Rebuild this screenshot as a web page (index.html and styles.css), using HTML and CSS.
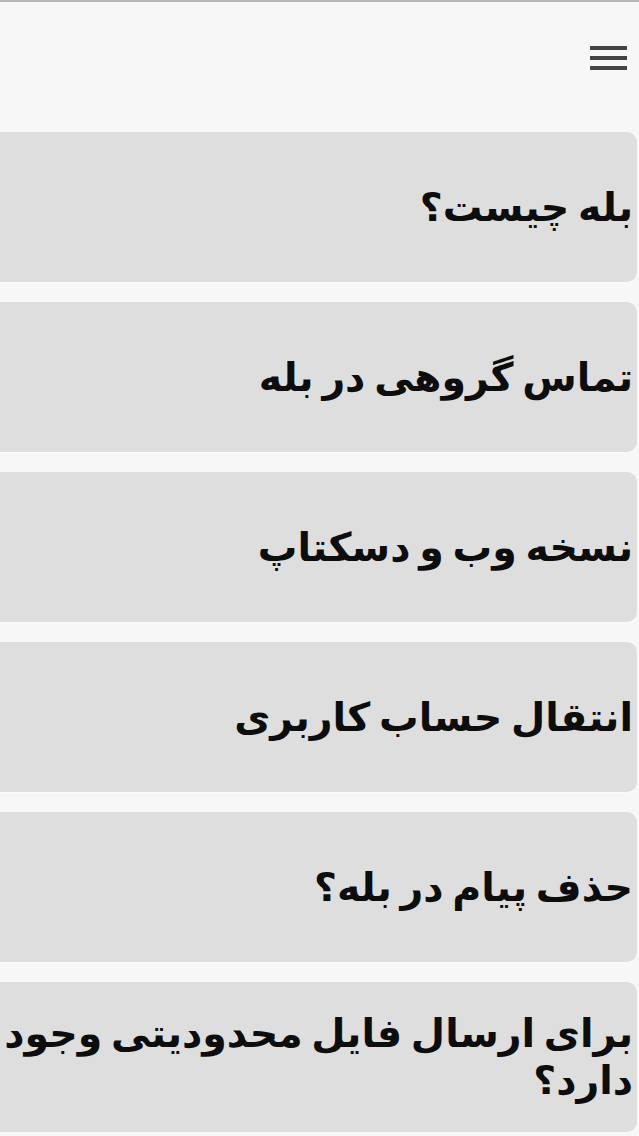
FILE: index.html
```html
<!DOCTYPE html>
<html lang="fa" dir="rtl">
<head>
<meta charset="utf-8">
<title>سوالات متداول</title>
<link rel="stylesheet" href="styles.css">
</head>
<body>
<div class="topline"></div>
<header class="header">
  <button class="menu" aria-label="منو">
    <svg width="37" height="24" viewBox="0 0 37 24"><rect x="0" y="0" width="37" height="4" fill="#444"/><rect x="0" y="10" width="37" height="4" fill="#444"/><rect x="0" y="20" width="37" height="4" fill="#444"/></svg>
  </button>
</header>
<main class="list">
  <div class="card"><h2 class="title">بله چیست؟</h2></div>
  <div class="card"><h2 class="title">تماس گروهی در بله</h2></div>
  <div class="card"><h2 class="title">نسخه وب و دسکتاپ</h2></div>
  <div class="card"><h2 class="title">انتقال حساب کاربری</h2></div>
  <div class="card"><h2 class="title">حذف پیام در بله؟</h2></div>
  <div class="card"><h2 class="title">برای ارسال فایل محدودیتی وجود دارد؟</h2></div>
</main>
</body>
</html>
```
FILE: styles.css
```css
html, body {
  margin: 0;
  padding: 0;
  background: #f7f7f7;
  overflow-x: hidden;
}
body {
  font-family: "DejaVu Sans", "Noto Sans", sans-serif;
  color: #0d0d0d;
}
.topline {
  height: 2px;
  background: #b8b8b8;
}
.header {
  height: 130px;
  display: flex;
  align-items: flex-start;
  justify-content: flex-start;
}
.menu {
  margin: 44px 12px 0 0;
  padding: 0;
  border: 0;
  background: none;
  line-height: 0;
}
.list {
  display: flex;
  flex-direction: column;
  gap: 20px;
  margin-right: 2px;
  margin-left: -16px;
}
.card {
  background: #dedede;
  border-radius: 0 10px 10px 0;
  min-height: 150px;
  box-sizing: border-box;
  padding: 26px 4px 26px 0;
  display: flex;
  align-items: center;
  box-shadow: 0 1px 0 #fbfbfb;
}
.title {
  margin: 0;
  font-size: 39.5px;
  font-weight: bold;
  line-height: 47px;
  word-spacing: -5px;
  text-align: right;
  width: 100%;
}
```
